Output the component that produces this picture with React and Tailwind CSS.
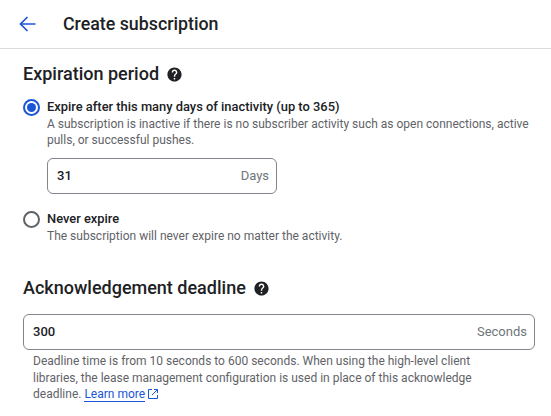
function HelpIcon() {
    return (
        <svg width="17" height="17" viewBox="0 0 24 24" fill="#202124" className="shrink-0">
            <path d="M12 2C6.48 2 2 6.48 2 12s4.48 10 10 10 10-4.48 10-10S17.52 2 12 2zm1 17h-2v-2h2v2zm2.07-7.75l-.9.92C13.45 12.9 13 13.5 13 15h-2v-.5c0-1.1.45-2.1 1.17-2.83l1.24-1.26c.37-.36.59-.86.59-1.41 0-1.1-.9-2-2-2s-2 .9-2 2H8c0-2.21 1.79-4 4-4s4 1.79 4 4c0 .88-.36 1.68-.93 2.25z" />
        </svg>
    );
}

function Radio({ checked }) {
    return (
        <div className={`flex h-[17px] w-[17px] shrink-0 items-center justify-center rounded-full border-2 ${checked ? 'border-[#1a56d6]' : 'border-[#5f6368]'}`}>
            {checked && <div className="h-[9px] w-[9px] rounded-full bg-[#1a56d6]" />}
        </div>
    );
}

function Field({ value, unit, className }) {
    return (
        <div className={`flex h-9 items-center justify-between rounded-md border border-[#80868b] pl-[9px] pr-[7px] ${className}`}>
            <span className="text-[13px] font-medium text-[#202124]">{value}</span>
            <span className="text-[13px] text-[#70757a]">{unit}</span>
        </div>
    );
}

export default function App() {
    return (
        <div className="h-[416px] w-[551px] overflow-hidden bg-white font-['Roboto',sans-serif]">
            <div className="flex h-[49px] items-center border-b border-[#dadce0] pl-[19px]">
                <svg width="17" height="16" viewBox="0 0 17 16" fill="none" stroke="#1a56d6" strokeWidth="1.7">
                    <path d="M16.5 8H1.5M8.5 1L1.5 8l7 7" />
                </svg>
                <h1 className="ml-[27px] text-[17.8px] font-medium text-[#202124]">Create subscription</h1>
            </div>

            <div className="px-[23px]">
                <div className="mt-[13px] flex items-center gap-[7px]">
                    <h2 className="text-[18px] leading-6 font-medium text-[#202124]">Expiration period</h2>
                    <HelpIcon />
                </div>

                <div className="mt-[13px] flex gap-[7px]">
                    <Radio checked />
                    <div className="min-w-0">
                        <p className="text-[12.9px] leading-4 font-medium text-[#202124]">Expire after this many days of inactivity (up to 365)</p>
                        <p className="mt-[1px] w-[490px] text-xs leading-4 text-[#5f6368]">
                            A subscription is inactive if there is no subscriber activity such as open connections, active pulls, or successful pushes.
                        </p>
                    </div>
                </div>

                <Field value="31" unit="Days" className="mt-[10px] ml-6 w-[230px]" />

                <div className="mt-[17px] flex gap-[7px]">
                    <Radio />
                    <div>
                        <p className="text-[12.9px] leading-4 font-medium text-[#202124]">Never expire</p>
                        <p className="mt-[1px] text-xs leading-4 text-[#5f6368]">The subscription will never expire no matter the activity.</p>
                    </div>
                </div>

                <div className="mt-[32px] flex items-center gap-[7px]">
                    <h2 className="text-[18px] leading-6 font-medium text-[#202124]">Acknowledgement deadline</h2>
                    <HelpIcon />
                </div>

                <Field value="300" unit="Seconds" className="mt-[14px] w-[512px]" />

                <p className="mt-[3px] w-[480px] pl-[10px] text-xs leading-[16.5px] text-[#5f6368]">
                    Deadline time is from 10 seconds to 600 seconds. When using the high-level client libraries, the lease management configuration is used in place of this acknowledge deadline.{' '}
                    <span className="border-b border-[#1a56d6] text-[#1a56d6]">Learn more</span>
                    <svg className="ml-[2px] inline-block align-[-2px]" width="12" height="12" viewBox="0 0 24 24" fill="none" stroke="#1a56d6" strokeWidth="2">
                        <path d="M10 3H3v18h18v-7M14 3h7v7M21 3L10 14" />
                    </svg>
                </p>
            </div>
        </div>
    );
}
